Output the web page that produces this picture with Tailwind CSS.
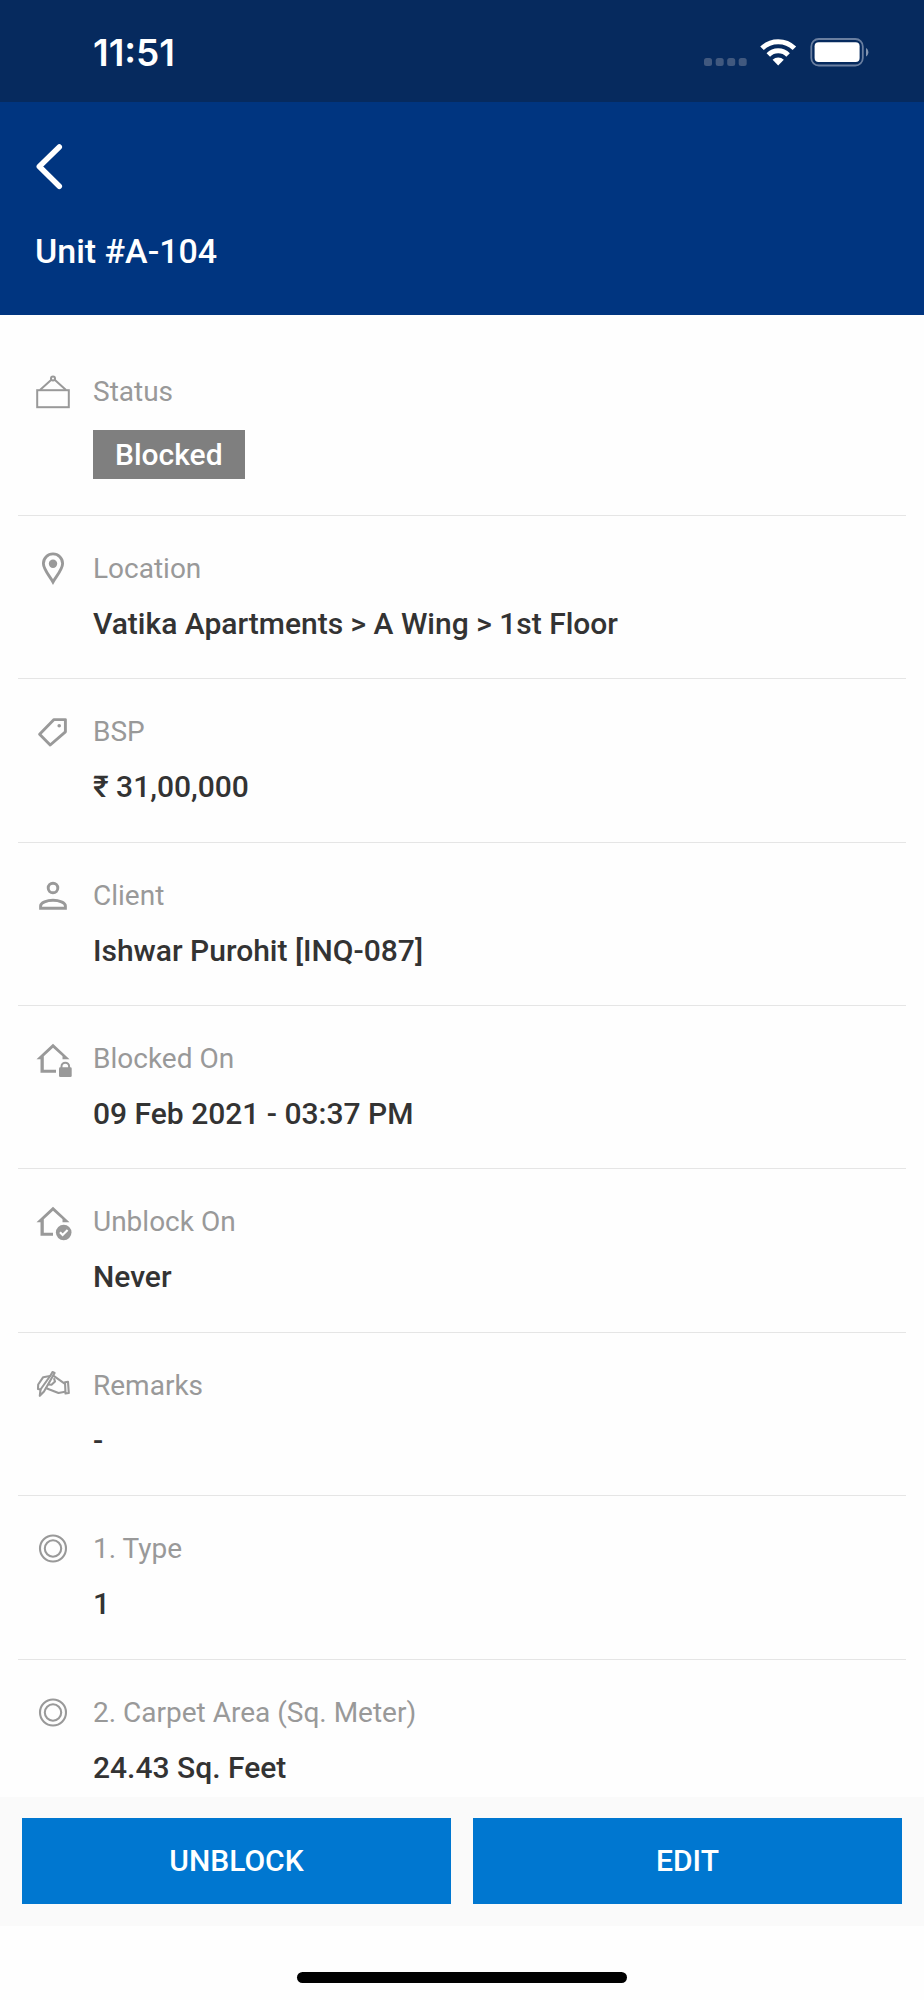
<!DOCTYPE html>
<html lang="en">
<head>
    <meta charset="UTF-8">
    <meta name="viewport" content="width=device-width, initial-scale=1.0">
    <title>Unit #A-104</title>
    <script src="https://cdn.jsdelivr.net/npm/@tailwindcss/browser@4"></script>
</head>
<body class="bg-[#fefefe] font-[Roboto,sans-serif] text-[#333333]">
    <div class="flex flex-col min-h-screen">

        <!-- Status bar -->
        <div class="flex items-center justify-between h-[102px] pt-1 pl-[93px] pr-[55px] bg-[#062a5e] text-white">
            <span class="font-[Inter,sans-serif] text-[37px] leading-10 font-semibold">11:51</span>
            <svg class="w-[165px] h-[36px]" viewBox="0 0 165 36" fill="none" aria-hidden="true">
                <g fill="#41597f">
                    <rect x="0" y="23" width="8" height="8" rx="2.5" />
                    <rect x="11.7" y="23" width="8" height="8" rx="2.5" />
                    <rect x="23.2" y="23" width="8" height="8" rx="2.5" />
                    <rect x="34.7" y="23" width="8" height="8" rx="2.5" />
                </g>
                <g stroke="#fff" stroke-width="5">
                    <path d="M58 13.300a23 23 0 0 1 32.400 0" />
                    <path d="M64.300 19.900a14 14 0 0 1 19.800 0" />
                </g>
                <path d="M74.200 30.500l-5.600-5.700a8 8 0 0 1 11.200 0z" fill="#fff" />
                <rect x="107.300" y="4" width="51.500" height="26.500" rx="7.500" stroke="#6a7fa0" stroke-width="1.800" />
                <rect x="110.600" y="7.300" width="45" height="19.800" rx="4" fill="#fff" />
                <path d="M162 13v8.500a5 5 0 0 0 0-8.500z" fill="#8294b0" />
            </svg>
        </div>

        <!-- Header -->
        <header class="h-[213px] px-[35px] pt-10 bg-[#003580] text-white">
            <button type="button" aria-label="Back" class="block">
                <svg class="w-[30px] h-[50px]" viewBox="0 0 30 50" fill="none" stroke="#fff" stroke-width="5.500" stroke-linecap="round" stroke-linejoin="round">
                    <path d="M24.300 5L4.300 24.500L24.300 44.300" />
                </svg>
            </button>
            <h1 class="mt-[39px] text-[34px] leading-10 font-medium">Unit #A-104</h1>
        </header>

        <!-- Details -->
        <main class="px-[18px] pt-6">
            <section class="flex gap-[22px] pl-[17px] pt-[35px] pb-9 border-b border-[#e5e5e5]">
                <svg class="w-9 h-9 shrink-0" viewBox="0 0 36 36" fill="none" stroke="#999" stroke-width="2">
                    <rect x="2.200" y="16.200" width="31.600" height="17" />
                    <circle cx="18" cy="4.500" r="2" />
                    <path d="M5 16L16.600 5.500M31 16L19.400 5.500" />
                </svg>
                <div>
                    <h2 class="text-[28px] leading-9 text-[#999999]">Status</h2>
                    <p class="mt-5 px-[22px] bg-[#7f7f7f] text-[30px] leading-[49px] font-medium text-white">Blocked</p>
                </div>
            </section>

            <section class="flex gap-[22px] pl-[17px] pt-[35px] pb-[34px] border-b border-[#e5e5e5]">
                <svg class="w-9 h-9 shrink-0" viewBox="0 0 36 36" fill="none">
                    <path d="M18 31C15 25.500 8.400 18.500 8.400 12.500a9.600 9.600 0 0 1 19.200 0C27.600 18.500 21 25.500 18 31z" stroke="#999" stroke-width="2.900" />
                    <circle cx="18" cy="12.700" r="4.200" fill="#999" />
                </svg>
                <div>
                    <h2 class="text-[28px] leading-9 text-[#999999]">Location</h2>
                    <p class="mt-[17px] text-[30px] leading-10 font-medium">Vatika Apartments &gt; A Wing &gt; 1st Floor</p>
                </div>
            </section>

            <section class="flex gap-[22px] pl-[17px] pt-[35px] pb-[35px] border-b border-[#e5e5e5]">
                <svg class="w-9 h-9 shrink-0" viewBox="0 0 36 36" fill="none">
                    <path d="M19 5.600H30.400V17.800L15.200 31L4.600 20.300z" stroke="#999" stroke-width="2.900" stroke-linejoin="round" />
                    <circle cx="24.200" cy="11.700" r="1.800" fill="#999" />
                </svg>
                <div>
                    <h2 class="text-[28px] leading-9 text-[#999999]">BSP</h2>
                    <p class="mt-[17px] text-[30px] leading-10 font-medium">₹ 31,00,000</p>
                </div>
            </section>

            <section class="flex gap-[22px] pl-[17px] pt-[35px] pb-[34px] border-b border-[#e5e5e5]">
                <svg class="w-9 h-9 shrink-0" viewBox="0 0 36 36" fill="none" stroke="#999" stroke-width="2.900">
                    <circle cx="18" cy="10" r="4.800" />
                    <path d="M5.600 30.300V28C5.600 24.500 12 22.300 18 22.300S30.400 24.500 30.400 28V30.300z" />
                </svg>
                <div>
                    <h2 class="text-[28px] leading-9 text-[#999999]">Client</h2>
                    <p class="mt-[17px] text-[30px] leading-10 font-medium">Ishwar Purohit [INQ-087]</p>
                </div>
            </section>

            <section class="flex gap-[22px] pl-[17px] pt-[35px] pb-[34px] border-b border-[#e5e5e5]">
                <svg class="w-9 h-9 shrink-0 overflow-visible" viewBox="0 0 36 36" fill="#999">
                    <path d="M18 2.700L1.500 18.200H5.500V31.800H21V28.800H8.800V15.300L18 6.800L27.500 15.300V18.200H34.500z" />
                    <rect x="24" y="26.300" width="12.700" height="9.700" rx="1.300" />
                    <path d="M26.500 27V25.500a3.800 3.800 0 0 1 7.600 0V27" fill="none" stroke="#999" stroke-width="2" />
                </svg>
                <div>
                    <h2 class="text-[28px] leading-9 text-[#999999]">Blocked On</h2>
                    <p class="mt-[17px] text-[30px] leading-10 font-medium">09 Feb 2021 - 03:37 PM</p>
                </div>
            </section>

            <section class="flex gap-[22px] pl-[17px] pt-[35px] pb-[35px] border-b border-[#e5e5e5]">
                <svg class="w-9 h-9 shrink-0 overflow-visible" viewBox="0 0 36 36" fill="#999">
                    <path d="M18 2.700L1.500 18.200H5.500V31.800H18V28.800H8.800V15.300L18 6.800L27.500 15.300V18.200H34.500z" />
                    <circle cx="28.700" cy="28.500" r="7.800" />
                    <path d="M25 28.300L27.600 31L32.600 26" fill="none" stroke="#fff" stroke-width="2.200" />
                </svg>
                <div>
                    <h2 class="text-[28px] leading-9 text-[#999999]">Unblock On</h2>
                    <p class="mt-[17px] text-[30px] leading-10 font-medium">Never</p>
                </div>
            </section>

            <section class="flex gap-[22px] pl-[17px] pt-[35px] pb-[34px] border-b border-[#e5e5e5]">
                <svg class="w-9 h-9 shrink-0" viewBox="0 0 36 36" fill="none" stroke="#999" stroke-width="2.100" stroke-linejoin="round" stroke-linecap="round">
                    <path d="M17.500 4L19.600 5L9 23.500L4.800 27.800L5.500 21.500L15.500 7.500z" />
                    <path d="M15 8L8.200 9.200L3.200 16.500L3 21L5.500 21.500" />
                    <path d="M19 8.200L30 15.800M11 20L14.500 21.500L23.500 25L30 23.800" />
                    <path d="M13.500 16.500L16.500 16.800L20 13.500L19.200 11" />
                    <path d="M30 14.200L33 13.800L33.800 25L30.500 25.500z" />
                </svg>
                <div>
                    <h2 class="text-[28px] leading-9 text-[#999999]">Remarks</h2>
                    <p class="mt-[17px] text-[30px] leading-10 font-medium">-</p>
                </div>
            </section>

            <section class="flex gap-[22px] pl-[17px] pt-[35px] pb-[35px] border-b border-[#e5e5e5]">
                <svg class="w-9 h-9 shrink-0" viewBox="0 0 36 36" fill="none" stroke="#999" stroke-width="2.100">
                    <circle cx="18" cy="17.500" r="13" />
                    <circle cx="18" cy="17.500" r="8.200" />
                </svg>
                <div>
                    <h2 class="text-[28px] leading-9 text-[#999999]">1. Type</h2>
                    <p class="mt-[17px] text-[30px] leading-10 font-medium">1</p>
                </div>
            </section>

            <section class="flex gap-[22px] pl-[17px] pt-[35px] pb-2">
                <svg class="w-9 h-9 shrink-0" viewBox="0 0 36 36" fill="none" stroke="#999" stroke-width="2.100">
                    <circle cx="18" cy="17.500" r="13" />
                    <circle cx="18" cy="17.500" r="8.200" />
                </svg>
                <div>
                    <h2 class="text-[28px] leading-9 text-[#999999]">2. Carpet Area (Sq. Meter)</h2>
                    <p class="mt-[17px] text-[30px] leading-10 font-medium">24.43 Sq. Feet</p>
                </div>
            </section>
        </main>

        <!-- Actions -->
        <footer class="mt-auto">
            <div class="grid grid-cols-2 gap-[22px] px-[22px] pt-[21px] pb-[22px] bg-[#fafafa]">
                <button type="button" class="h-[86px] bg-[#0077d0] text-[30px] leading-10 font-medium text-white">UNBLOCK</button>
                <button type="button" class="h-[86px] bg-[#0077d0] text-[30px] leading-10 font-medium text-white">EDIT</button>
            </div>
            <div class="flex justify-center pt-[46px] pb-[17px]">
                <div class="w-[330px] h-[11px] rounded-full bg-black"></div>
            </div>
        </footer>
    </div>
</body>
</html>
